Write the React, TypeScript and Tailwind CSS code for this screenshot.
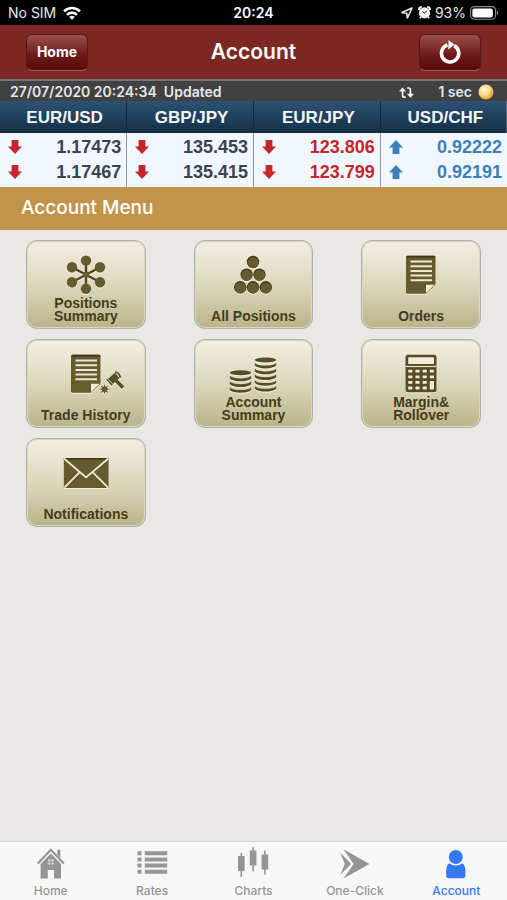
import React from "react";

interface Quote {
  pair: string;
  bid: string;
  ask: string;
  up: boolean;
  color: string;
}

interface TileProps {
  label: string;
  children: React.ReactNode;
}

interface TabProps {
  label: string;
  active?: boolean;
  children: React.ReactNode;
}

const quotes: Quote[] = [
  { pair: "EUR/USD", bid: "1.17473", ask: "1.17467", up: false, color: "text-[#3b4251]" },
  { pair: "GBP/JPY", bid: "135.453", ask: "135.415", up: false, color: "text-[#3b4251]" },
  { pair: "EUR/JPY", bid: "123.806", ask: "123.799", up: false, color: "text-[#c3272b]" },
  { pair: "USD/CHF", bid: "0.92222", ask: "0.92191", up: true, color: "text-[#3b80b8]" },
];

const StatusBar = () => (
  <div className="grid h-[25px] grid-cols-3 items-center bg-black px-2 text-sm text-gray-200">
    <div className="flex items-center gap-[6px]">
      <span>No SIM</span>
      <svg width="20" height="14" viewBox="0 0 18 14" fill="none" stroke="#fff" strokeWidth="2.5">
        <path d="M1 5.4a11.4 11.4 0 0 1 16 0" />
        <path d="M4 8.8a7.1 7.1 0 0 1 10 0" />
        <path d="M9 13.8 6.2 11a4 4 0 0 1 5.6 0Z" fill="#fff" stroke="none" />
      </svg>
    </div>
    <span className="text-center font-semibold text-white">20:24</span>
    <div className="flex items-center justify-end gap-1">
      <svg className="mr-px" width="12" height="12" viewBox="0 0 12 12" fill="none" stroke="#e5e7eb" strokeWidth="1.6" strokeLinejoin="round">
        <path d="M11 1 1 5.6l4.8.6.6 4.8Z" />
      </svg>
      <svg width="13" height="13" viewBox="0 0 13 13">
        <circle cx="6.5" cy="6.9" r="5.6" fill="#f3f4f6" />
        <path d="M.9 4A3 3 0 0 1 3.8 1M12.1 4A3 3 0 0 0 9.2 1M3 10.8l-1.2 1.5M10 10.8l1.2 1.5" stroke="#f3f4f6" strokeWidth="1.8" fill="none" />
        <path d="m4.4 5.4 2.1 1.8 2.2-2.4" stroke="#111" strokeWidth="1" fill="none" />
      </svg>
      <span>93%</span>
      <svg width="29" height="14" viewBox="0 0 29 14">
        <rect x=".6" y=".6" width="25" height="12.6" rx="3.6" fill="none" stroke="#8b8b8b" strokeWidth="1.1" />
        <rect x="2.4" y="2.4" width="20.4" height="9" rx="2" fill="#fff" />
        <path d="M27 4.8c1.6.6 1.6 3.8 0 4.4Z" fill="#8b8b8b" />
      </svg>
    </div>
  </div>
);

const headerButton =
  "flex h-[37px] w-[62px] items-center justify-center rounded-md border border-[#5c1715] border-b-[#a5605c] bg-linear-to-b from-[#9c504d] via-[#6f1a18] via-55% to-[#560b0a] text-sm font-bold text-white";

const Header = () => (
  <header className="flex h-[54px] items-center justify-between bg-[#7c2723] px-[26px]">
    <button type="button" className={headerButton}>
      Home
    </button>
    <h1 className="text-[21px] font-semibold text-gray-50">Account</h1>
    <button type="button" aria-label="Refresh" className={headerButton}>
      <svg width="24" height="26" viewBox="0 0 24 26">
        <path d="M16.2 6.6A8.7 8.7 0 1 1 9.4 6" fill="none" stroke="#fff" strokeWidth="3.5" />
        <path d="M10.6 1.2 16.6 5.6 10.2 10.6Z" fill="#fff" />
      </svg>
    </button>
  </header>
);

const UpdateBar = () => (
  <div className="flex h-[22px] items-center justify-between border-t-2 border-[#777] bg-[#414141] pt-[2px] pr-[13px] pl-[10px] text-sm leading-4 font-semibold text-gray-200">
    <span className="whitespace-pre">27/07/2020 20:24:34  Updated</span>
    <div className="flex items-center">
      <svg className="mr-6" width="15" height="13" viewBox="0 0 15 13">
        <path d="M3.6 4v5.4q0 1.8 1.8 1.8h1.4M8 2h1.6q1.8 0 1.8 1.8V9" fill="none" stroke="#f3f4f6" strokeWidth="1.7" />
        <path d="M0 5.4 3.6 1.6l3.6 3.8ZM7.8 7.8l3.6 4 3.6-4Z" fill="#f3f4f6" />
      </svg>
      <span className="mr-[6px]">1 sec</span>
      <svg width="16" height="16" viewBox="0 0 16 16">
        <defs>
          <radialGradient id="lamp" cx="40%" cy="35%" r="65%">
            <stop offset="0" stopColor="#fffbe0" />
            <stop offset=".5" stopColor="#f9de8b" />
            <stop offset="1" stopColor="#dba63c" />
          </radialGradient>
        </defs>
        <circle cx="8" cy="8" r="7.5" fill="url(#lamp)" />
      </svg>
    </div>
  </div>
);

const Arrow = ({ up }: { up: boolean }) => (
  <svg width="14" height="14" viewBox="0 0 14 14">
    {up ? (
      <path d="M7 0 14 7.5H10.4V14H3.6V7.5H0Z" fill="#3b80b8" />
    ) : (
      <path d="M7 14 14 6.5H10.4V0H3.6V6.5H0Z" fill="#c3272b" />
    )}
  </svg>
);

const QuoteTable = () => (
  <table className="w-full table-fixed border-collapse font-['Liberation_Sans',sans-serif]">
    <thead>
      <tr className="h-8 bg-linear-to-b from-[#2c5273] to-[#142f45]">
        {quotes.map((q) => (
          <th
            key={q.pair}
            className="border-r border-[#10283c] p-0 pt-px pl-[3px] text-[17px] leading-5 font-bold text-gray-100 last:border-r-0"
          >
            {q.pair}
          </th>
        ))}
      </tr>
    </thead>
    <tbody className="bg-[#f1f7fe]">
      {(["bid", "ask"] as const).map((side) => (
        <tr key={side} className="h-[27px]">
          {quotes.map((q) => (
            <td
              key={q.pair}
              className={`border-r border-[#8d98a3] p-0 last:border-r-0 ${side === "bid" ? "" : "pb-1"}`}
            >
              <div className={`flex items-center justify-between pr-[5px] pl-2 text-lg leading-5 font-bold ${q.color}`}>
                <Arrow up={q.up} />
                {q[side]}
              </div>
            </td>
          ))}
        </tr>
      ))}
    </tbody>
  </table>
);

const Tile: React.FC<TileProps> = ({ label, children }) => (
  <button
    type="button"
    className="flex h-[89px] flex-col items-center justify-between rounded-[11px] border border-[#b3b1a6] bg-linear-to-b from-[#f3f0e2] via-[#dcd8bd] via-50% to-[#b9b489] pt-[14px] pb-[5px] text-center font-['Liberation_Sans',sans-serif] text-sm leading-[13px] font-bold text-[#463c1b] shadow-[inset_0_0_0_1px_#d9d6c3]"
  >
    <svg
      className="shrink-0 drop-shadow-[0_1px_0_#f5f2e2]"
      width="80"
      height="40"
      viewBox="0 0 80 40"
      fill="#665b2e"
    >
      {children}
    </svg>
    <span className="max-w-[94px]">{label}</span>
  </button>
);

const Sheet = () => (
  <>
    <path d="M26.5.7H53q1.5 0 1.5 1.5V30l-9.5 8.7H26.5Q25 38.7 25 37.2v-35Q25 .7 26.5.7Z" />
    <path d="M25 2.4Q25 .7 26.5.7H53q1.5 0 1.5 1.7Z" fill="#40371a" />
    <path d="M29.5 6.5H51M29.5 11.2H51M29.5 15.9H51M29.5 20.6H51M29.5 25.3H51" stroke="#ece8d2" strokeWidth="2" />
    <path d="M45 29.8h8.8L45 38Z" fill="#f0ecd8" />
  </>
);

// one pile of coins: a full ellipse on top and curved bands below it
const Coins = ({ x, top, count }: { x: number; top: number; count: number }) => (
  <>
    <ellipse cx={x + 10.7} cy={top} rx="10.7" ry="2.5" fill="#574c25" />
    {Array.from({ length: count }, (_, i) => {
      const y = top + 3 + i * 5.8;
      return (
        <path
          key={i}
          fill="#574c25"
          d={`M${x} ${y}q3 2.6 10.7 2.6t10.7-2.6v2.6q-3 2.8-10.7 2.8t-10.7-2.8Z`}
        />
      );
    })}
  </>
);

const Menu = () => (
  <div className="grid grid-cols-3 gap-x-12 gap-y-[10px] px-[26px] pt-[10px]">
    <Tile label="Positions Summary">
      <path d="M40 6v28M26 12.3 54 27.3M26 27.3 54 12.3" stroke="#4f4521" strokeWidth="2.4" />
      {[[40, 5.6], [40, 33.8], [26, 12.3], [26, 27.3], [54, 12.3], [54, 27.3]].map(([x, y]) => (
        <circle key={`${x}-${y}`} cx={x} cy={y} r="5.2" />
      ))}
      <circle cx="40" cy="19.8" r="3" />
    </Tile>
    <Tile label="All Positions">
      {[[40, 7], [33.6, 19.6], [46.4, 19.6], [27.2, 32.3], [40, 32.3], [52.8, 32.3]].map(([x, y]) => (
        <g key={`${x}-${y}`}>
          <circle cx={x} cy={y} r="6.2" fill="#40371a" />
          <circle cx={x} cy={y + 0.8} r="5.5" />
        </g>
      ))}
    </Tile>
    <Tile label="Orders">
      <Sheet />
    </Tile>
    <Tile label="Trade History">
      <Sheet />
      <path d="m58.5 30.2 1 2.7 2.6-1.3-1.2 2.7 2.8 1-2.8 1 1.2 2.7-2.6-1.2-1 2.4-1-2.4-2.6 1.2 1.2-2.7-2.8-1 2.8-1-1.2-2.7 2.6 1.3Z" />
      <g stroke="#574c25" fill="none">
        <path d="m69 25.5 8 8.2" strokeWidth="3.4" />
        <path d="m64.6 27.4 6.6-6" strokeWidth="7" />
        <path d="m60.8 25.2 5.4 6M69.2 17.8q3.6.6 5.4 5.8" strokeWidth="1.7" />
      </g>
    </Tile>
    <Tile label="Account Summary">
      <Coins x={16.8} top={18.8} count={3} />
      <Coins x={41.8} top={6} count={5} />
    </Tile>
    <Tile label="Margin& Rollover">
      <rect x="24.5" y=".7" width="31" height="37.5" rx="2.5" fill="#574c25" />
      <rect x="27.2" y="3.2" width="25.8" height="6.8" rx=".6" fill="#eeebd7" />
      <path d="M24.5 12.5h31" stroke="#e6e2c9" strokeWidth="1.2" />
      {[0, 1, 2, 3].map((row) =>
        [0, 1, 2, 3].map((col) =>
          col === 3 && row > 1 ? null : (
            <rect
              key={`${row}-${col}`}
              x={27.2 + col * 7.2}
              y={15.8 + row * 5.6}
              width="4.2"
              height="2.8"
              rx=".6"
              fill="#eeebd7"
            />
          )
        )
      )}
      <rect x="48.8" y="27" width="4.2" height="8.4" rx=".6" fill="#eeebd7" />
    </Tile>
    <Tile label="Notifications">
      <rect x="17.8" y="5" width="44.8" height="30" />
      <path d="M17.8 5h44.8v1.4H17.8Z" fill="#40371a" />
      <path d="M18 5.5 40 24.4 62.4 5.5M18.3 34.6l15.5-15.4M62.1 34.6 46.6 19.2" stroke="#f0ecd8" strokeWidth="1.8" fill="none" />
    </Tile>
  </div>
);

const Tab: React.FC<TabProps> = ({ label, active, children }) => (
  <a
    href="#"
    className={`flex flex-1 flex-col items-center gap-1 text-xs leading-4 font-medium ${active ? "text-[#3478f6]" : "text-[#959595]"}`}
  >
    <svg width="32" height="32" viewBox="0 0 32 32" fill="currentColor">
      {children}
    </svg>
    {label}
  </a>
);

const TabBar = () => (
  <nav className="mt-auto flex border-t border-[#d6d5d2] bg-[#f7f7f7] pt-[5px] pb-px">
    <Tab label="Home">
      <path d="M22.3 2.8h3v8l-3-3Z" />
      <path d="M2.8 16.4 15.8 2.8 28.8 16.4" fill="none" stroke="currentColor" strokeWidth="2.2" />
      <path d="M15.8 6.4 26 17v14.5h-7V23h-6.2v8.5H5.6V17Z" />
      <path d="M13.2 12.2h2.2v2.2h-2.2ZM16.4 12.2h2.2v2.2h-2.2ZM13.2 15.4h2.2v2.2h-2.2ZM16.4 15.4h2.2v2.2h-2.2Z" fill="#ddd" />
    </Tab>
    <Tab label="Rates">
      {[4.2, 10.4, 16.6, 22.8].map((y) => (
        <path key={y} d={`M1.5 ${y}h4v4h-4ZM8.8 ${y}h22.4v4H8.8Z`} />
      ))}
    </Tab>
    <Tab label="Charts">
      <path d="M0 9h6.6v15H0ZM2.5 6h1.6v24H2.5Z" />
      <path d="M11.8 3.4h6.6v15h-6.6ZM14.3.2h1.6v24h-1.6Z" />
      <path d="M23.6 7.4h6.6v15h-6.6ZM26.1 3.4h1.6v24h-1.6Z" />
    </Tab>
    <Tab label="One-Click">
      <path d="M4.6 2.2 30.4 17 4.6 31.4 14.6 17Z" />
      <path d="M1.2 5.6 12 17 1.2 28 5.8 17Z" />
    </Tab>
    <Tab label="Account" active>
      <circle cx="15.8" cy="10" r="7" />
      <path d="M9 16.2q6.8 4.6 13.6 0 2.8 2.4 2.8 8v4.4q0 2.6-2.4 2.6H8.6q-2.4 0-2.4-2.6v-4.4q0-5.6 2.8-8Z" />
    </Tab>
  </nav>
);

export default function App() {
  return (
    <div className="flex min-h-screen flex-col bg-[#e9e8e4] font-[Inter,sans-serif]">
      <StatusBar />
      <Header />
      <UpdateBar />
      <QuoteTable />
      <h2 className="flex h-[43px] items-center bg-[#c2944a] px-[21px] text-[19px] font-medium text-white">
        Account Menu
      </h2>
      <Menu />
      <TabBar />
    </div>
  );
}
